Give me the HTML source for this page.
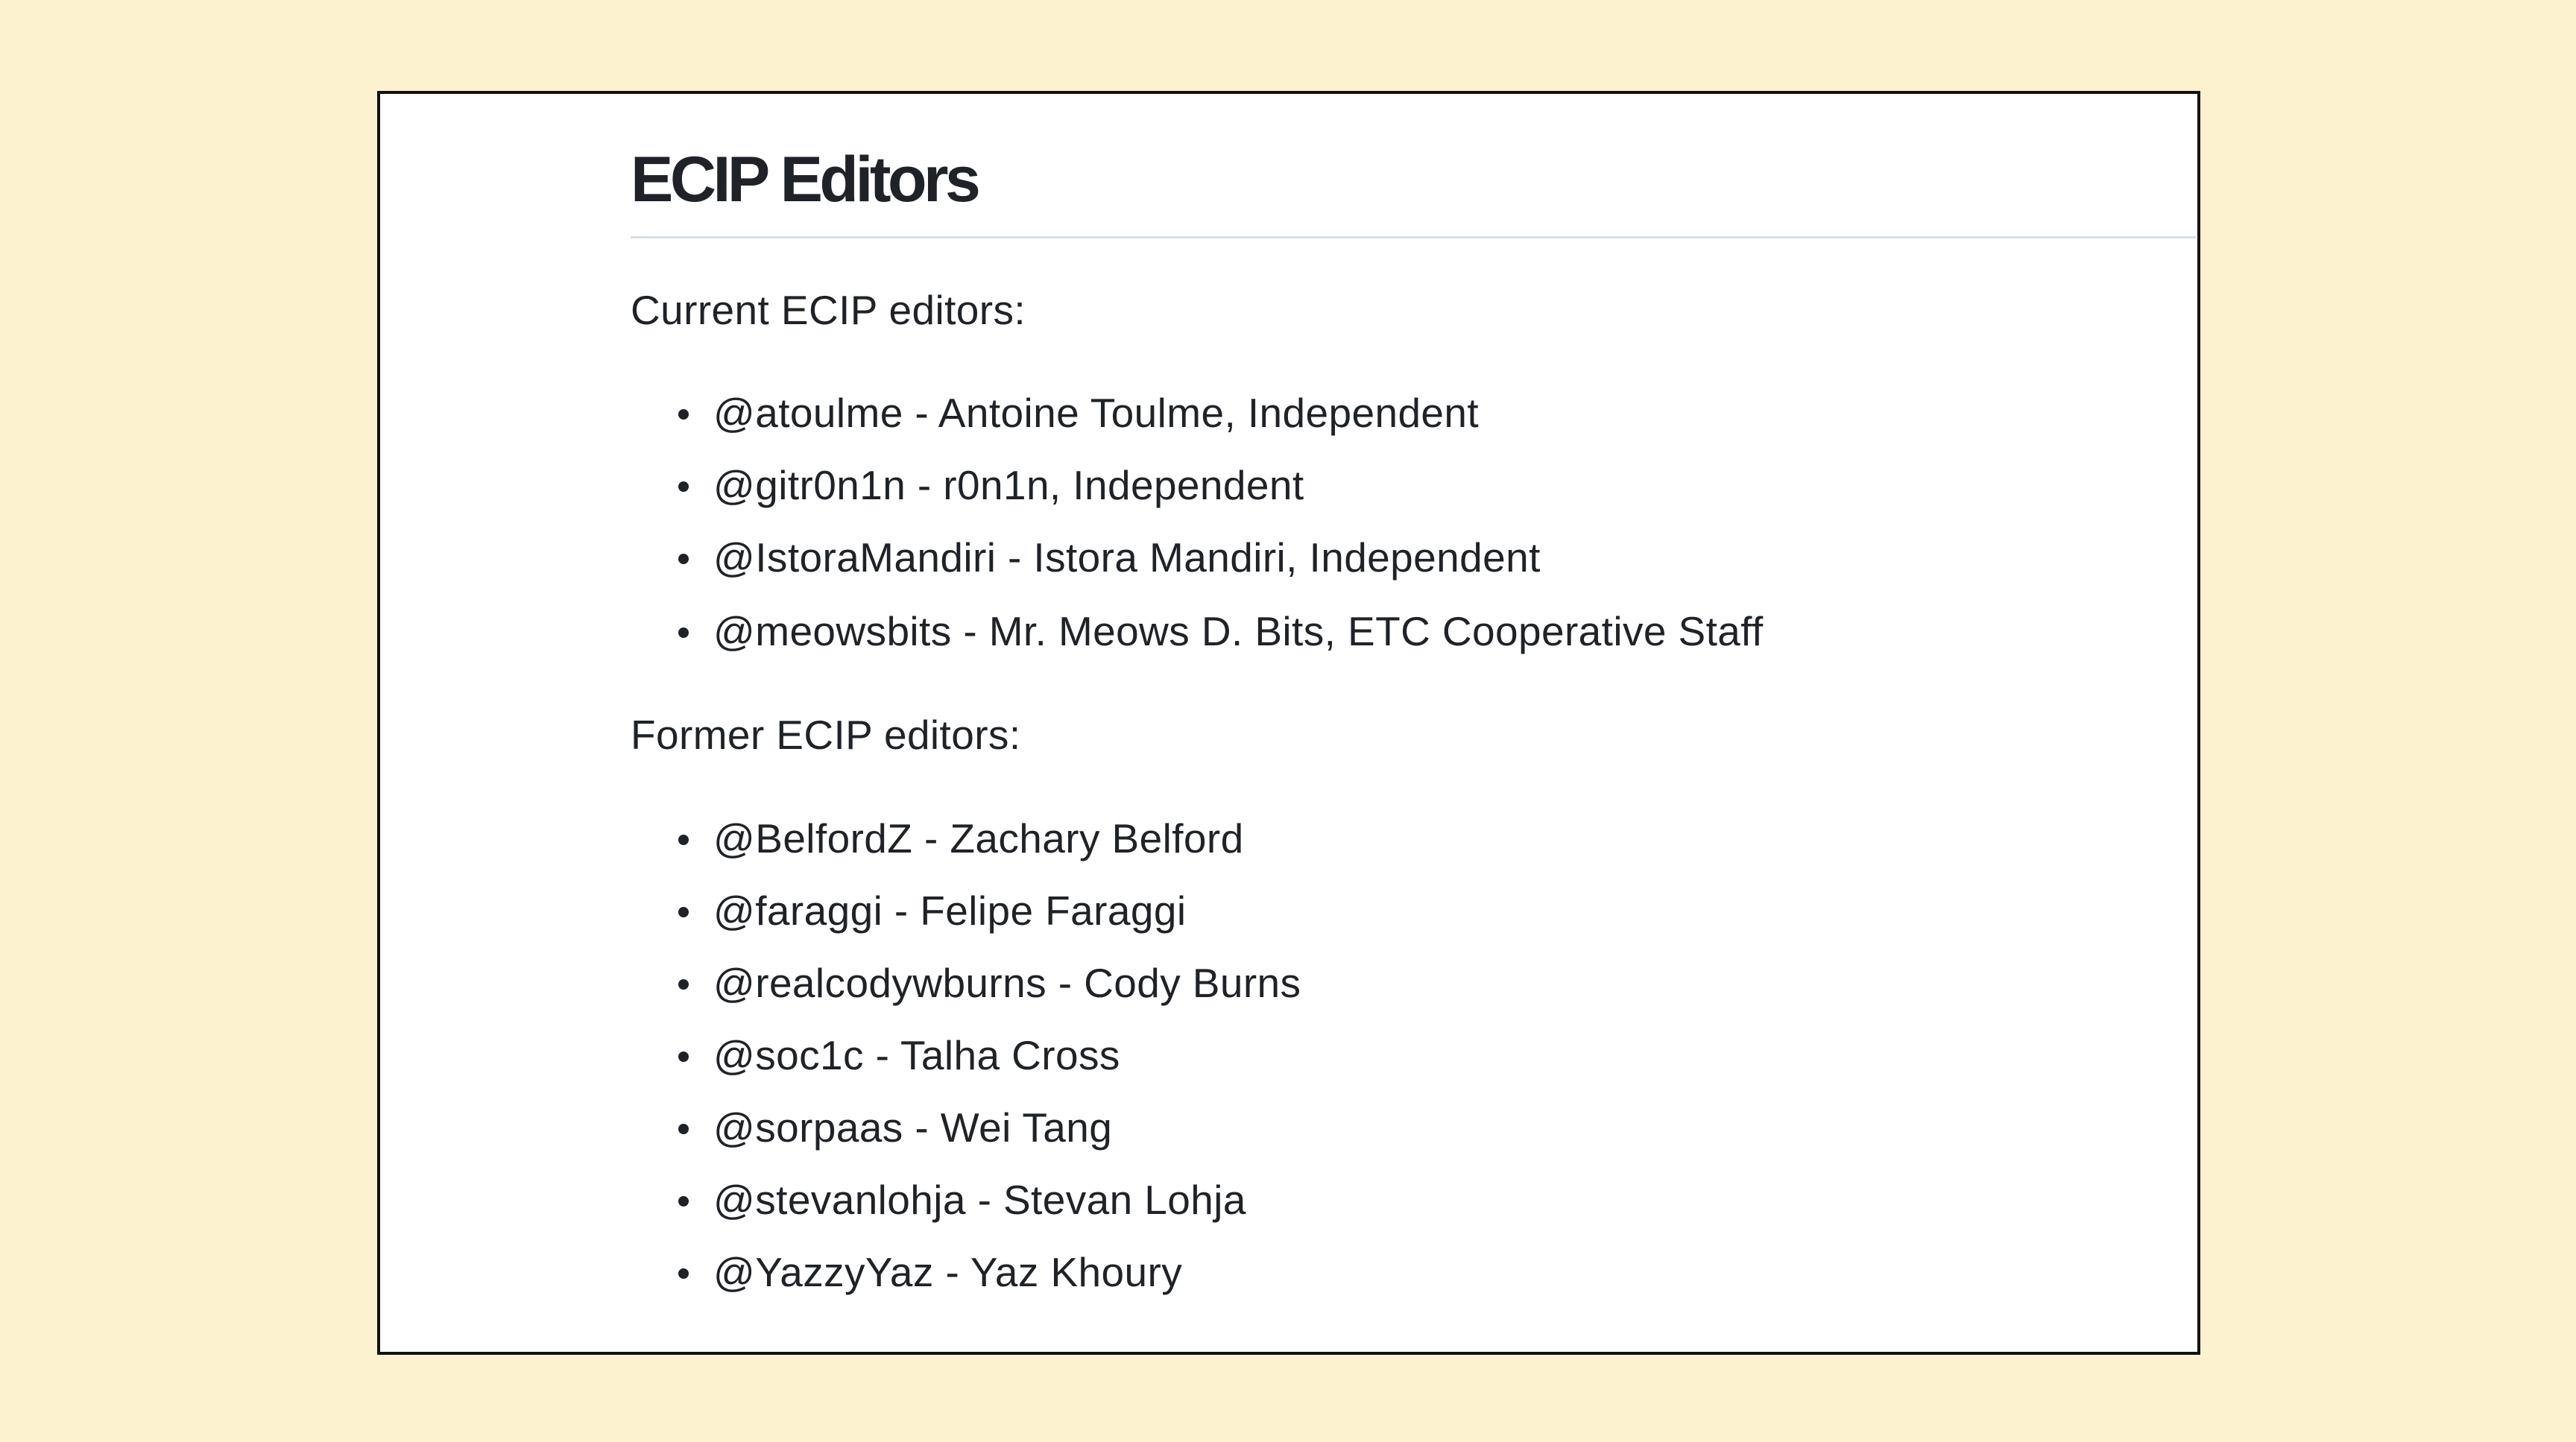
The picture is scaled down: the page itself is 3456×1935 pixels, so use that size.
<!DOCTYPE html>
<html><head><meta charset="utf-8"><style>
html,body{margin:0;padding:0}
body{width:3456px;height:1935px;background:#fdf2cf;position:relative;overflow:hidden;font-family:"Liberation Sans",Arial,sans-serif;color:#1f2328}
.box{position:absolute;left:506px;top:122px;width:2438px;height:1688px;background:#fff;border:4px solid #111}
.t{position:absolute;white-space:nowrap;font-size:55px;line-height:55px;letter-spacing:0.4px;margin-top:-3px}
.h{position:absolute;left:846px;font-size:86px;line-height:86px;font-weight:bold;white-space:nowrap;top:198px;letter-spacing:-4.5px}
.rule{position:absolute;left:846px;top:317px;width:2100px;height:3px;background:#d8dee4}
.b{position:absolute;width:14px;height:14px;border-radius:50%;background:#1f2328;left:910px;margin-top:-3px}
</style></head><body>
<div class="box"></div>
<div class="h">ECIP Editors</div>
<div class="rule"></div>
<div class="t" style="left:846px;top:392px">Current ECIP editors:</div>
<div class="t" style="left:957px;top:530px">@atoulme - Antoine Toulme, Independent</div>
<div class="t" style="left:957px;top:627px">@gitr0n1n - r0n1n, Independent</div>
<div class="t" style="left:957px;top:724px">@IstoraMandiri - Istora Mandiri, Independent</div>
<div class="t" style="left:957px;top:823px">@meowsbits - Mr. Meows D. Bits, ETC Cooperative Staff</div>
<div class="t" style="left:846px;top:962px">Former ECIP editors:</div>
<div class="t" style="left:957px;top:1101px">@BelfordZ - Zachary Belford</div>
<div class="t" style="left:957px;top:1198px">@faraggi - Felipe Faraggi</div>
<div class="t" style="left:957px;top:1295px">@realcodywburns - Cody Burns</div>
<div class="t" style="left:957px;top:1392px">@soc1c - Talha Cross</div>
<div class="t" style="left:957px;top:1489px">@sorpaas - Wei Tang</div>
<div class="t" style="left:957px;top:1586px">@stevanlohja - Stevan Lohja</div>
<div class="t" style="left:957px;top:1683px">@YazzyYaz - Yaz Khoury</div>
<div class="b" style="top:552px"></div>
<div class="b" style="top:649px"></div>
<div class="b" style="top:746px"></div>
<div class="b" style="top:845px"></div>
<div class="b" style="top:1123px"></div>
<div class="b" style="top:1220px"></div>
<div class="b" style="top:1317px"></div>
<div class="b" style="top:1414px"></div>
<div class="b" style="top:1511px"></div>
<div class="b" style="top:1608px"></div>
<div class="b" style="top:1705px"></div>
</body></html>
